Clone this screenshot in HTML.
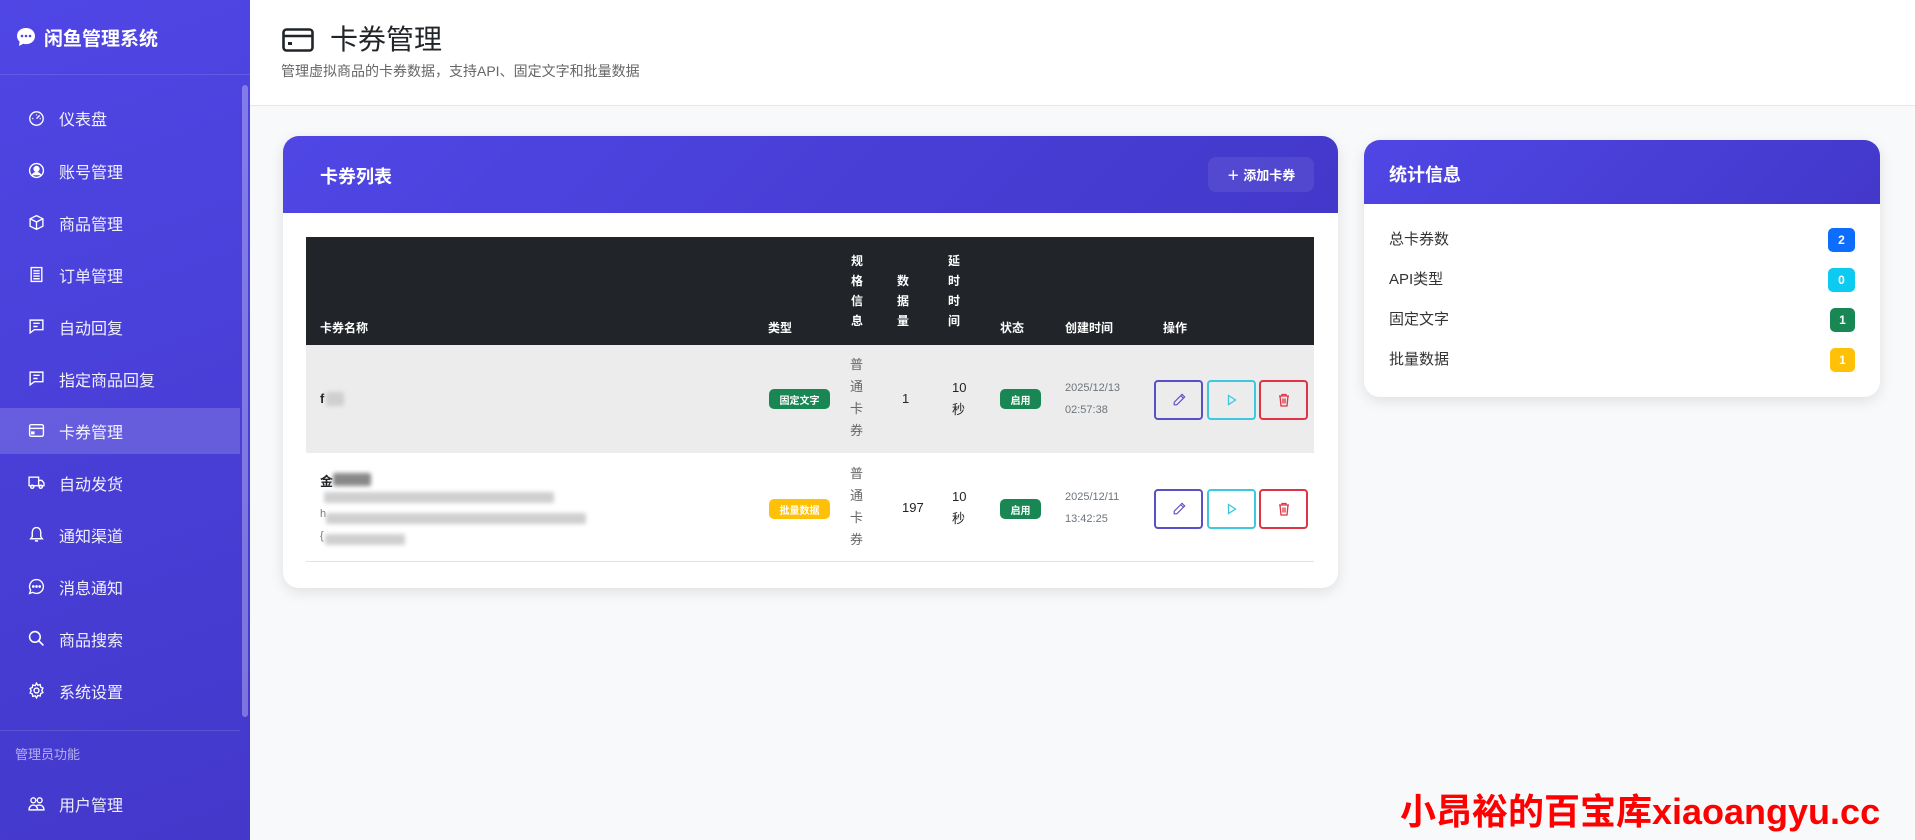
<!DOCTYPE html>
<html><head><meta charset="utf-8">
<style>
*{margin:0;padding:0;box-sizing:border-box}
body{width:1915px;height:840px;overflow:hidden;background:#f8f9fa;font-family:"Liberation Sans","Noto Sans CJK SC",sans-serif;position:relative;color:#212529}
.sb{position:absolute;left:0;top:0;width:250px;height:840px;background:linear-gradient(160deg,#4f46e5,#4338ca);color:#fff}
.sb .brand{height:75px;border-bottom:1px solid rgba(255,255,255,.12);display:flex;align-items:center;padding-left:15px;font-size:19px;font-weight:bold}
.sb .brand svg{margin-right:7px}
.nav{position:absolute;left:0;width:240px;height:46px;display:flex;align-items:center;font-size:16px;color:rgba(255,255,255,.92)}
.nav svg{position:absolute;left:28px;top:14px}
.nav span{position:absolute;left:59px}
.nav.act{background:rgba(255,255,255,.16)}
.thumb{position:absolute;left:242px;top:85px;width:6px;height:632px;border-radius:3px;background:rgba(255,255,255,.3)}
.hdr{position:absolute;left:250px;top:0;width:1665px;height:106px;background:#fff;border-bottom:1px solid #e5e7eb}
.card{position:absolute;background:#fff;border-radius:16px;box-shadow:0 4px 14px rgba(0,0,0,.1);overflow:hidden}
.ch{background:linear-gradient(135deg,#4f46e5,#4338ca);color:#fff;font-weight:bold;font-size:18px;position:relative}
.th{position:absolute;color:#fff;font-size:12px;font-weight:bold;line-height:20px;width:14px;text-align:center}
.badge{position:absolute;height:20px;border-radius:5px;color:#fff;font-size:10px;font-weight:bold;display:flex;align-items:center;justify-content:center}
.stk{position:absolute;font-size:13px;color:#666;line-height:22px;width:14px}
.num{position:absolute;font-size:13px;color:#212529;line-height:22px}
.dt{position:absolute;font-size:11px;color:#6c757d;line-height:22px}
.btn{position:absolute;width:49px;height:40px;border:2px solid;border-radius:4px;display:flex;align-items:center;justify-content:center}
.blur{position:absolute;background:#cfcfcf;filter:blur(2px);border-radius:2px}
.srow{position:absolute;left:25px;right:25px;font-size:15px;color:#333;height:24px}
.srow b{position:absolute;right:0;top:0;width:27px;height:24px;border-radius:5px;color:#fff;font-size:12px;display:flex;align-items:center;justify-content:center}
</style></head><body>
<div class="sb">
 <div class="brand"><svg width="22" height="22" viewBox="0 0 22 22"><path d="M11 2C5.5 2 2 5.6 2 10c0 2.2 1 4.2 2.6 5.6L4 20l4.3-2.3c.9.3 1.8.4 2.7.4 5.5 0 9-3.6 9-8S16.5 2 11 2z" fill="#fff"/><circle cx="7" cy="10" r="1.3" fill="#4f46e5"/><circle cx="11" cy="10" r="1.3" fill="#4f46e5"/><circle cx="15" cy="10" r="1.3" fill="#4f46e5"/></svg>闲鱼管理系统</div>
 <div class="thumb"></div>
 <div class="nav" style="top:95px"><svg width="17" height="17" viewBox="0 0 16 16" fill="none" stroke="#fff" stroke-width="1.3"><circle cx="8" cy="9" r="6.3"/><path d="M8 9l3-3M4 9h1M11 9h1M8 5v1"/></svg><span>仪表盘</span></div>
 <div class="nav" style="top:148px"><svg width="17" height="17" viewBox="0 0 16 16" fill="none" stroke="#fff" stroke-width="1.3"><circle cx="8" cy="8" r="6.5"/><circle cx="8" cy="6.5" r="2.3" fill="#fff"/><path d="M4 12.5c1-2 2.5-2.6 4-2.6s3 .6 4 2.6" fill="#fff"/></svg><span>账号管理</span></div>
 <div class="nav" style="top:200px"><svg width="17" height="17" viewBox="0 0 16 16" fill="none" stroke="#fff" stroke-width="1.3"><path d="M8 1.5l6 3v7l-6 3-6-3v-7z M2 4.5l6 3 6-3 M8 7.5v7"/></svg><span>商品管理</span></div>
 <div class="nav" style="top:252px"><svg width="17" height="17" viewBox="0 0 16 16" fill="none" stroke="#fff" stroke-width="1.3"><path d="M3 1.5h10v13H3z M5 4.5h6M5 7h6M5 9.5h6M5 12h6"/></svg><span>订单管理</span></div>
 <div class="nav" style="top:304px"><svg width="17" height="17" viewBox="0 0 16 16" fill="none" stroke="#fff" stroke-width="1.3"><path d="M2 2h12v9H6l-4 3z M5 5h6M5 8h4"/></svg><span>自动回复</span></div>
 <div class="nav" style="top:356px"><svg width="17" height="17" viewBox="0 0 16 16" fill="none" stroke="#fff" stroke-width="1.3"><path d="M2 2h12v9H6l-4 3z M5 5h6M5 8h4"/></svg><span>指定商品回复</span></div>
 <div class="nav act" style="top:408px"><svg width="17" height="17" viewBox="0 0 16 16" fill="none" stroke="#fff" stroke-width="1.3"><rect x="1.5" y="2.5" width="13" height="11" rx="1.5"/><path d="M1.5 6h13"/><rect x="3.5" y="9.5" width="2" height="1.5" fill="#fff"/></svg><span>卡券管理</span></div>
 <div class="nav" style="top:460px"><svg width="17" height="17" viewBox="0 0 16 16" fill="none" stroke="#fff" stroke-width="1.3"><path d="M1 3h9v8H1z M10 6h3l2 2.5V11h-5"/><circle cx="4" cy="12" r="1.5"/><circle cx="12" cy="12" r="1.5"/></svg><span>自动发货</span></div>
 <div class="nav" style="top:512px"><svg width="17" height="17" viewBox="0 0 16 16" fill="none" stroke="#fff" stroke-width="1.3"><path d="M8 1.5c-2.5 0-4 2-4 4.5v4l-1.5 2h11L12 10V6c0-2.5-1.5-4.5-4-4.5z M6.5 14h3"/></svg><span>通知渠道</span></div>
 <div class="nav" style="top:564px"><svg width="17" height="17" viewBox="0 0 16 16" fill="none" stroke="#fff" stroke-width="1.3"><path d="M8 1.5a6.5 6.5 0 1 1-3.5 12L1.5 14.5l1-3A6.5 6.5 0 0 1 8 1.5z"/><circle cx="5" cy="8" r=".6" fill="#fff"/><circle cx="8" cy="8" r=".6" fill="#fff"/><circle cx="11" cy="8" r=".6" fill="#fff"/></svg><span>消息通知</span></div>
 <div class="nav" style="top:616px"><svg width="17" height="17" viewBox="0 0 16 16" fill="none" stroke="#fff" stroke-width="1.5"><circle cx="6.5" cy="6.5" r="5"/><path d="M10 10l4.5 4.5"/></svg><span>商品搜索</span></div>
 <div class="nav" style="top:668px"><svg width="17" height="17" viewBox="0 0 16 16" fill="none" stroke="#fff" stroke-width="1.3"><circle cx="8" cy="8" r="2.3"/><path d="M8 1l1.2 2 2.3-.6.4 2.3 2.1 1-1 2.1 1 2.1-2.1 1-.4 2.3-2.3-.6L8 15l-1.2-2-2.3.6-.4-2.3-2.1-1 1-2.1-1-2.1 2.1-1 .4-2.3 2.3.6z"/></svg><span>系统设置</span></div>
 <div style="position:absolute;top:730px;left:0;width:240px;border-top:1px solid rgba(255,255,255,.12)"></div>
 <div style="position:absolute;top:744px;left:15px;font-size:13px;color:rgba(255,255,255,.6)">管理员功能</div>
 <div class="nav" style="top:781px"><svg width="17" height="17" viewBox="0 0 16 16" fill="none" stroke="#fff" stroke-width="1.3"><circle cx="5" cy="5" r="2.3"/><circle cx="11" cy="5" r="2.3"/><path d="M1 14c0-3 2-4.5 4-4.5s4 1.5 4 4.5zM8 10c.8-.4 1.8-.5 3-.5 2 0 4 1.5 4 4.5H9"/></svg><span>用户管理</span></div>
</div>

<div class="hdr">
 <svg style="position:absolute;left:32px;top:28px" width="32" height="24" viewBox="0 0 32 24" fill="none" stroke="#212529" stroke-width="2.6"><rect x="1.5" y="1.5" width="29" height="21" rx="3"/><path d="M1.5 8h29"/><rect x="6" y="14" width="4" height="3" fill="#212529" stroke="none"/></svg>
 <div style="position:absolute;left:80px;top:18px;font-size:28px;color:#212529">卡券管理</div>
 <div style="position:absolute;left:31px;top:61px;font-size:14px;color:#666">管理虚拟商品的卡券数据，支持API、固定文字和批量数据</div>
</div>

<div class="card" style="left:283px;top:136px;width:1055px;height:452px">
 <div class="ch" style="height:77px"><span style="position:absolute;left:37px;top:27px">卡券列表</span>
  <div style="position:absolute;left:925px;top:21px;width:106px;height:35px;border-radius:8px;background:rgba(255,255,255,.08);font-size:13px;display:flex;align-items:center;justify-content:center">＋ 添加卡券</div></div>
 <div style="position:absolute;left:23px;top:101px;width:1008px;height:108px;background:#212529"></div>
 <div style="position:absolute;left:23px;top:209px;width:1008px;height:108px;background:#ececec"></div>
 <div style="position:absolute;left:23px;top:317px;width:1008px;height:109px;border-bottom:1px solid #dee2e6"></div>
 <div class="th" style="left:37px;top:182px;width:60px;text-align:left">卡券名称</div>
 <div class="th" style="left:485px;top:182px;width:40px;text-align:left">类型</div>
 <div class="th" style="left:567px;top:115px">规<br>格<br>信<br>息</div>
 <div class="th" style="left:613px;top:135px">数<br>据<br>量</div>
 <div class="th" style="left:664px;top:115px">延<br>时<br>时<br>间</div>
 <div class="th" style="left:717px;top:182px;width:40px;text-align:left">状态</div>
 <div class="th" style="left:782px;top:182px;width:70px;text-align:left">创建时间</div>
 <div class="th" style="left:880px;top:182px;width:40px;text-align:left">操作</div>
 <div style="position:absolute;left:37px;top:255px;font-size:13px;font-weight:bold">f</div><div class="blur" style="left:43px;top:256px;width:18px;height:14px"></div>
 <div class="badge" style="left:486px;top:253px;width:61px;background:#198754">固定文字</div>
 <div class="stk" style="left:567px;top:218px">普<br>通<br>卡<br>券</div>
 <div class="num" style="left:619px;top:252px">1</div>
 <div class="num" style="left:669px;top:241px">10<br>秒</div>
 <div class="badge" style="left:717px;top:253px;width:41px;background:#198754">启用</div>
 <div class="dt" style="left:782px;top:241px">2025/12/13<br>02:57:38</div>
 <div class="btn" style="left:871px;top:244px;border-color:#5b4fc7"><svg width="14" height="14" viewBox="0 0 16 16" fill="none" stroke="#5b4fc7" stroke-width="1.3"><path d="M11.5 1.5l3 3-9 9H2.5v-3z M10 3l3 3"/></svg></div>
 <div class="btn" style="left:924px;top:244px;border-color:#3cc8df"><svg width="10" height="12" viewBox="0 0 10 12" fill="none" stroke="#3cc8df" stroke-width="1.3"><path d="M1.5 1.5l7 4.5-7 4.5z"/></svg></div>
 <div class="btn" style="left:976px;top:244px;border-color:#dc3545"><svg width="12" height="14" viewBox="0 0 12 14" fill="none" stroke="#dc3545" stroke-width="1.3"><path d="M1 3h10M4 3V1.5h4V3M2 3l1 10h6l1-10M5 5.5v5M7 5.5v5"/></svg></div>
 <div style="position:absolute;left:23px;top:317px;width:451px;height:108px;background:#fff"></div>
 <div style="position:absolute;left:37px;top:335px;font-size:13px;font-weight:bold">金</div><div class="blur" style="left:50px;top:337px;width:38px;height:13px;background:#888"></div>
 <div class="blur" style="left:41px;top:356px;width:230px;height:11px"></div>
 <div style="position:absolute;left:37px;top:372px;font-size:11px;color:#777">h</div><div class="blur" style="left:43px;top:377px;width:260px;height:11px"></div>
 <div style="position:absolute;left:37px;top:394px;font-size:11px;color:#777">{</div><div class="blur" style="left:42px;top:398px;width:80px;height:11px"></div>
 <div class="badge" style="left:486px;top:363px;width:61px;background:#ffc107">批量数据</div>
 <div class="stk" style="left:567px;top:327px">普<br>通<br>卡<br>券</div>
 <div class="num" style="left:619px;top:361px">197</div>
 <div class="num" style="left:669px;top:350px">10<br>秒</div>
 <div class="badge" style="left:717px;top:363px;width:41px;background:#198754">启用</div>
 <div class="dt" style="left:782px;top:350px">2025/12/11<br>13:42:25</div>
 <div class="btn" style="left:871px;top:353px;border-color:#5b4fc7"><svg width="14" height="14" viewBox="0 0 16 16" fill="none" stroke="#5b4fc7" stroke-width="1.3"><path d="M11.5 1.5l3 3-9 9H2.5v-3z M10 3l3 3"/></svg></div>
 <div class="btn" style="left:924px;top:353px;border-color:#3cc8df"><svg width="10" height="12" viewBox="0 0 10 12" fill="none" stroke="#3cc8df" stroke-width="1.3"><path d="M1.5 1.5l7 4.5-7 4.5z"/></svg></div>
 <div class="btn" style="left:976px;top:353px;border-color:#dc3545"><svg width="12" height="14" viewBox="0 0 12 14" fill="none" stroke="#dc3545" stroke-width="1.3"><path d="M1 3h10M4 3V1.5h4V3M2 3l1 10h6l1-10M5 5.5v5M7 5.5v5"/></svg></div>
</div>

<div class="card" style="left:1364px;top:140px;width:516px;height:257px">
 <div class="ch" style="height:64px"><span style="position:absolute;left:25px;top:21px">统计信息</span></div>
 <div class="srow" style="top:88px">总卡券数<b style="background:#0d6efd">2</b></div>
 <div class="srow" style="top:128px">API类型<b style="background:#0dcaf0">0</b></div>
 <div class="srow" style="top:168px">固定文字<b style="background:#198754;width:25px">1</b></div>
 <div class="srow" style="top:208px">批量数据<b style="background:#ffc107;width:25px">1</b></div>
</div>

<div style="position:absolute;left:1400px;top:790px;font-size:36px;font-weight:bold;color:#f00;white-space:nowrap;line-height:44px">小昂裕的百宝库xiaoangyu.cc</div>
</body></html>
